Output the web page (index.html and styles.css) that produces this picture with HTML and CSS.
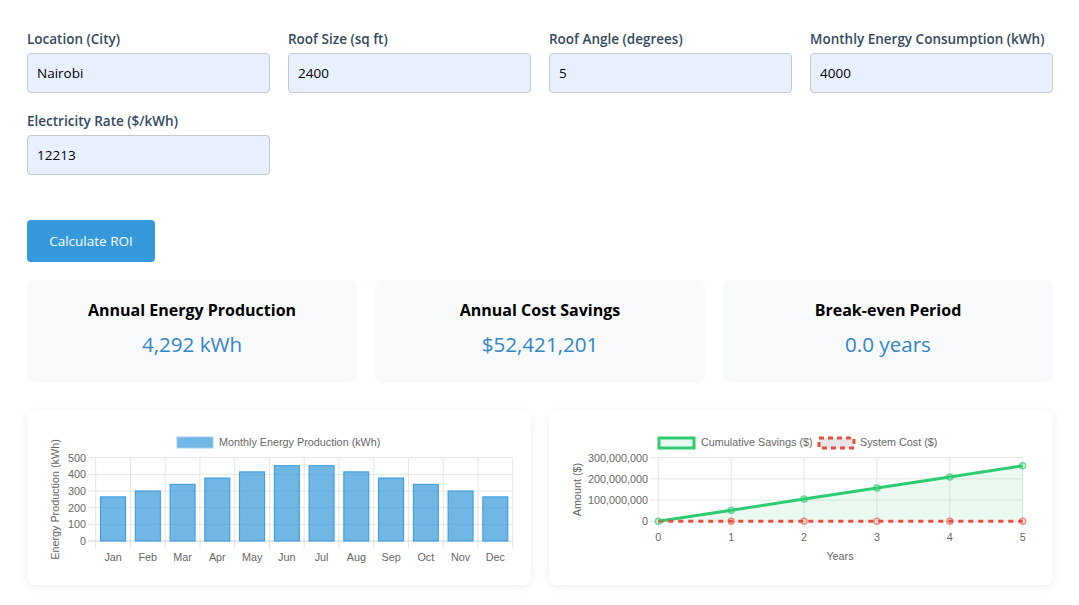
FILE: index.html
```html
<!DOCTYPE html>
<html>
<head>
<meta charset="utf-8">
<link rel="stylesheet" href="styles.css">
</head>
<body>
<div class="app">
  <div class="form-grid">
    <div class="field"><label>Location (City)</label><input type="text" value="Nairobi"></div>
    <div class="field"><label>Roof Size (sq ft)</label><input type="text" value="2400"></div>
    <div class="field"><label>Roof Angle (degrees)</label><input type="text" value="5"></div>
    <div class="field"><label>Monthly Energy Consumption (kWh)</label><input type="text" value="4000"></div>
    <div class="field"><label>Electricity Rate ($/kWh)</label><input type="text" value="12213"></div>
  </div>
  <button class="calc-btn">Calculate ROI</button>
  <div class="results">
    <div class="result-card"><h3>Annual Energy Production</h3><p>4,292 kWh</p></div>
    <div class="result-card"><h3>Annual Cost Savings</h3><p>$52,421,201</p></div>
    <div class="result-card"><h3>Break-even Period</h3><p>0.0 years</p></div>
  </div>
  <div class="charts">
    <div class="chart-card">
      <svg class="chart" width="504" height="175" viewBox="0 0 504 175" font-family="'Liberation Sans', Arial, sans-serif" font-size="10.8" fill="#666">
        <g stroke="#e5e5e5" stroke-width="1">
          <line x1="60.7" y1="47.7" x2="485.7" y2="47.7"/>
          <line x1="60.7" y1="64.4" x2="485.7" y2="64.4"/>
          <line x1="60.7" y1="81" x2="485.7" y2="81"/>
          <line x1="60.7" y1="97.7" x2="485.7" y2="97.7"/>
          <line x1="60.7" y1="114.4" x2="485.7" y2="114.4"/>
          <line x1="68.7" y1="47.7" x2="68.7" y2="139"/>
          <line x1="103.45" y1="47.7" x2="103.45" y2="139"/>
          <line x1="138.2" y1="47.7" x2="138.2" y2="139"/>
          <line x1="172.95" y1="47.7" x2="172.95" y2="139"/>
          <line x1="207.7" y1="47.7" x2="207.7" y2="139"/>
          <line x1="242.45" y1="47.7" x2="242.45" y2="139"/>
          <line x1="277.2" y1="47.7" x2="277.2" y2="139"/>
          <line x1="311.95" y1="47.7" x2="311.95" y2="139"/>
          <line x1="346.7" y1="47.7" x2="346.7" y2="139"/>
          <line x1="381.45" y1="47.7" x2="381.45" y2="139"/>
          <line x1="416.2" y1="47.7" x2="416.2" y2="139"/>
          <line x1="450.95" y1="47.7" x2="450.95" y2="139"/>
          <line x1="485.7" y1="47.7" x2="485.7" y2="139"/>
        </g>
        <line x1="60.7" y1="131" x2="485.7" y2="131" stroke="#d0d0d0"/>
        <g fill="rgba(52,152,219,0.7)" stroke="#3498db" stroke-width="1">
          <rect x="73.58" y="86.85" width="25" height="44.15"/>
          <rect x="108.33" y="81" width="25" height="50"/>
          <rect x="143.08" y="74.35" width="25" height="56.65"/>
          <rect x="177.83" y="68.03" width="25" height="62.97"/>
          <rect x="212.58" y="61.86" width="25" height="69.14"/>
          <rect x="247.33" y="55.7" width="25" height="75.3"/>
          <rect x="282.08" y="55.7" width="25" height="75.3"/>
          <rect x="316.83" y="61.86" width="25" height="69.14"/>
          <rect x="351.58" y="68.03" width="25" height="62.97"/>
          <rect x="386.33" y="74.35" width="25" height="56.65"/>
          <rect x="421.08" y="81" width="25" height="50"/>
          <rect x="455.83" y="86.85" width="25" height="44.15"/>
        </g>
        <g text-anchor="end">
          <text x="59" y="51.5">500</text>
          <text x="59" y="68.2">400</text>
          <text x="59" y="84.8">300</text>
          <text x="59" y="101.5">200</text>
          <text x="59" y="118.2">100</text>
          <text x="59" y="134.8">0</text>
        </g>
        <g text-anchor="middle">
          <text x="86.1" y="151">Jan</text>
          <text x="120.8" y="151">Feb</text>
          <text x="155.6" y="151">Mar</text>
          <text x="190.3" y="151">Apr</text>
          <text x="225.1" y="151">May</text>
          <text x="259.8" y="151">Jun</text>
          <text x="294.6" y="151">Jul</text>
          <text x="329.3" y="151">Aug</text>
          <text x="364.1" y="151">Sep</text>
          <text x="398.8" y="151">Oct</text>
          <text x="433.6" y="151">Nov</text>
          <text x="468.3" y="151">Dec</text>
          <text transform="translate(32 89.5) rotate(-90)">Energy Production (kWh)</text>
        </g>
        <rect x="150" y="27" width="36" height="11" fill="rgba(52,152,219,0.7)" stroke="#9fcdee" stroke-width="1"/>
        <text x="192" y="36">Monthly Energy Production (kWh)</text>
      </svg>
    </div>
    <div class="chart-card">
      <svg class="chart" width="504" height="175" viewBox="0 0 504 175" font-family="'Liberation Sans', Arial, sans-serif" font-size="10.8" fill="#666">
        <g stroke="#e5e5e5" stroke-width="1">
          <line x1="101" y1="47.7" x2="473.7" y2="47.7"/>
          <line x1="101" y1="68.9" x2="473.7" y2="68.9"/>
          <line x1="101" y1="90.1" x2="473.7" y2="90.1"/>
          <line x1="101" y1="111.3" x2="473.7" y2="111.3"/>
          <line x1="109.3" y1="47.7" x2="109.3" y2="118"/>
          <line x1="182.2" y1="47.7" x2="182.2" y2="118"/>
          <line x1="255.1" y1="47.7" x2="255.1" y2="118"/>
          <line x1="327.9" y1="47.7" x2="327.9" y2="118"/>
          <line x1="400.8" y1="47.7" x2="400.8" y2="118"/>
          <line x1="473.7" y1="47.7" x2="473.7" y2="118"/>
        </g>
        <polygon points="109.3,111.3 182.2,100.2 255.1,89.1 327.9,78 400.8,66.9 473.7,55.7 473.7,111.3" fill="rgba(46,204,113,0.1)"/>
        <polyline points="109.3,111.3 182.2,100.2 255.1,89.1 327.9,78 400.8,66.9 473.7,55.7" fill="none" stroke="#2ecc71" stroke-width="3"/>
        <line x1="109.3" y1="111.3" x2="473.7" y2="111.3" stroke="#e74c3c" stroke-width="3" stroke-dasharray="5 5"/>
        <g fill="rgba(231,76,60,0.1)" stroke="rgba(231,76,60,0.6)" stroke-width="1.5">
          <circle cx="182.2" cy="111.3" r="3"/>
          <circle cx="255.1" cy="111.3" r="3"/>
          <circle cx="327.9" cy="111.3" r="3"/>
          <circle cx="400.8" cy="111.3" r="3"/>
          <circle cx="473.7" cy="111.3" r="3"/>
        </g>
        <g fill="rgba(46,204,113,0.15)" stroke="rgba(46,204,113,0.7)" stroke-width="1.5">
          <circle cx="109.3" cy="111.3" r="3"/>
          <circle cx="182.2" cy="100.2" r="3"/>
          <circle cx="255.1" cy="89.1" r="3"/>
          <circle cx="327.9" cy="78" r="3"/>
          <circle cx="400.8" cy="66.9" r="3"/>
          <circle cx="473.7" cy="55.7" r="3"/>
        </g>
        <g text-anchor="end">
          <text x="99" y="51.5">300,000,000</text>
          <text x="99" y="72.7">200,000,000</text>
          <text x="99" y="93.9">100,000,000</text>
          <text x="99" y="115.1">0</text>
        </g>
        <g text-anchor="middle">
          <text x="109.3" y="131">0</text>
          <text x="182.2" y="131">1</text>
          <text x="255.1" y="131">2</text>
          <text x="327.9" y="131">3</text>
          <text x="400.8" y="131">4</text>
          <text x="473.7" y="131">5</text>
          <text x="291" y="150">Years</text>
          <text transform="translate(31.5 79.5) rotate(-90)">Amount ($)</text>
        </g>
        <rect x="110" y="28" width="35" height="10" fill="rgba(46,204,113,0.1)" stroke="#2ecc71" stroke-width="3"/>
        <text x="152" y="36">Cumulative Savings ($)</text>
        <rect x="270" y="28" width="35" height="10" fill="#e6e6e6" stroke="#e74c3c" stroke-width="3" stroke-dasharray="5 4"/>
        <text x="311" y="36">System Cost ($)</text>
      </svg>
    </div>
  </div>
</div>
</body>
</html>
```
FILE: styles.css
```css
* { box-sizing: border-box; }
html, body { margin: 0; padding: 0; background: #fff; }
body {
  font-family: "Open Sans", "Noto Sans", "Liberation Sans", sans-serif;
  color: #000;
}
.app {
  padding: 29px 26px 20px 27px;
}
.form-grid {
  display: grid;
  grid-template-columns: repeat(4, 1fr);
  column-gap: 18px;
  row-gap: 18px;
}
.field label {
  display: block;
  font-size: 13.5px;
  font-weight: 600;
  line-height: 20px;
  color: #34495e;
  margin-bottom: 4px;
  white-space: nowrap;
}
.field input {
  display: block;
  width: 100%;
  height: 40px;
  padding: 0 9px;
  border: 1px solid #c3c8d0;
  border-radius: 4px;
  background: #e8f0fe;
  font-family: inherit;
  font-size: 13.5px;
  color: #000;
  outline: none;
}
.calc-btn {
  display: block;
  margin-top: 45px;
  width: 128px;
  height: 42px;
  border: none;
  border-radius: 4px;
  background: #3498db;
  color: #fff;
  font-family: inherit;
  font-size: 13.5px;
  padding: 0;
}
.results {
  margin-top: 18px;
  display: grid;
  grid-template-columns: repeat(3, 1fr);
  column-gap: 18px;
}
.result-card {
  background: #f8f9fa;
  border-radius: 8px;
  height: 103px;
  padding-top: 18px;
  text-align: center;
}
.result-card h3 {
  margin: 0;
  font-size: 16px;
  font-weight: 700;
  line-height: 24px;
}
.result-card p {
  margin: 7px 0 0;
  font-size: 20.6px;
  line-height: 30px;
  color: #3385c6;
}
.charts {
  margin-top: 27px;
  display: grid;
  grid-template-columns: repeat(2, 1fr);
  column-gap: 18px;
}
.chart-card {
  height: 175px;
  background: #fff;
  border-radius: 8px;
  box-shadow: 0 2px 8px rgba(0, 0, 0, 0.08);
  overflow: hidden;
}
.chart { display: block; }
```
